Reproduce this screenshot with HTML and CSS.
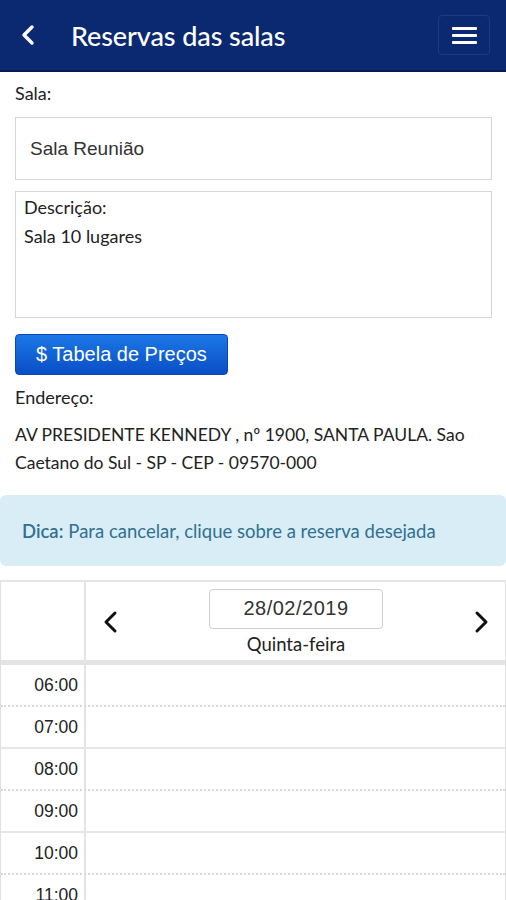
FILE: index.html
```html
<!DOCTYPE html>
<html lang="pt-BR">

<head>
	<meta charset="UTF-8">
	<meta name="viewport" content="width=device-width, initial-scale=1.0">
	<title>Reservas das salas</title>
	<link rel="stylesheet" href="styles.css">
</head>

<body>

	<header class="topbar">
		<a class="back" href="#">
			<svg width="16" height="22" viewBox="0 0 16 22"><path d="M12 3 L4 11 L12 19" fill="none" stroke="#fff" stroke-width="3.4" stroke-linecap="round" stroke-linejoin="round"/></svg>
		</a>
		<h1 class="title">Reservas das salas</h1>
		<button class="menu" type="button">
			<span></span><span></span><span></span>
		</button>
	</header>

	<main class="content">
		<div class="label">Sala:</div>
		<div class="field">Sala Reunião</div>

		<div class="descricao">
			<div>Descrição:</div>
			<div>Sala 10 lugares</div>
		</div>

		<button class="btn-precos" type="button">$ Tabela de Preços</button>

		<div class="label endereco-label">Endereço:</div>
		<p class="endereco">AV PRESIDENTE KENNEDY , nº 1900, SANTA PAULA. Sao Caetano do Sul - SP - CEP - 09570-000</p>
	</main>

	<div class="dica"><b>Dica:</b> Para cancelar, clique sobre a reserva desejada</div>

	<section class="agenda">
		<div class="agenda-head">
			<div class="hora-col"></div>
			<div class="dia-col">
				<svg class="nav" width="20" height="26" viewBox="0 0 20 26"><path d="M14 4 L5 13 L14 22" fill="none" stroke="#111" stroke-width="3" stroke-linecap="round" stroke-linejoin="round"/></svg>
				<div class="dia">
					<div class="data">28/02/2019</div>
					<div class="semana">Quinta-feira</div>
				</div>
				<svg class="nav" width="20" height="26" viewBox="0 0 20 26"><path d="M6 4 L15 13 L6 22" fill="none" stroke="#111" stroke-width="3" stroke-linecap="round" stroke-linejoin="round"/></svg>
			</div>
		</div>

		<div class="slot meia"><div class="hora">06:00</div><div class="livre"></div></div>
		<div class="slot"><div class="hora">07:00</div><div class="livre"></div></div>
		<div class="slot meia"><div class="hora">08:00</div><div class="livre"></div></div>
		<div class="slot"><div class="hora">09:00</div><div class="livre"></div></div>
		<div class="slot meia"><div class="hora">10:00</div><div class="livre"></div></div>
		<div class="slot"><div class="hora">11:00</div><div class="livre"></div></div>
	</section>

</body>

</html>
```

FILE: styles.css
```css
body {
	margin: 0;
	font-family: Lato, "Open Sans", sans-serif;
	color: #222;
	background: #fff;
}

.topbar {
	display: flex;
	align-items: center;
	height: 70px;
	background-color: #0b2970;
	border-bottom: 2px solid #071c52;
}

.back {
	display: flex;
	margin-left: 20px;
	width: 16px;
}

.title {
	margin: 0 0 0 35px;
	flex: 1;
	font-size: 27px;
	font-weight: 500;
	color: #fff;
	letter-spacing: -0.1px;
}

.menu {
	display: flex;
	flex-direction: column;
	justify-content: center;
	align-items: center;
	gap: 4px;
	width: 52px;
	height: 40px;
	margin-right: 16px;
	background: transparent;
	border: 1px solid #1d3a82;
	border-radius: 4px;
}

.menu span {
	display: block;
	width: 25px;
	height: 3px;
	background: #fff;
	border-radius: 1px;
}

.content {
	padding: 10px 14px 0 15px;
}

.label {
	font-size: 18px;
	line-height: 22px;
}

.field {
	margin-top: 13px;
	height: 61px;
	display: flex;
	align-items: center;
	padding-left: 14px;
	border: 1px solid #d6d6d6;
	font-family: "Liberation Sans", Arial, sans-serif;
	font-size: 19px;
	color: #333;
}

.descricao {
	margin-top: 11px;
	height: 116px;
	padding: 1px 8px 8px 8px;
	border: 1px solid #d6d6d6;
	font-size: 18px;
	line-height: 29px;
}

.btn-precos {
	margin-top: 16px;
	width: 213px;
	height: 41px;
	padding: 0 0 0 20px;
	text-align: left;
	background: linear-gradient(#1c78e6, #0a4ec6);
	color: #fff;
	border: 1px solid #0a48b8;
	border-radius: 4px;
	font-family: "Liberation Sans", Arial, sans-serif;
	font-size: 20px;
}

.endereco-label {
	margin-top: 11px;
}

.endereco {
	margin: 13px 0 0 0;
	font-size: 17.5px;
	line-height: 28px;
}

.dica {
	margin-top: 18px;
	height: 71px;
	display: flex;
	align-items: center;
	padding-left: 22px;
	background-color: #d9edf7;
	border-radius: 6px;
	color: #31708f;
	font-size: 18.5px;
}

.dica b {
	font-weight: 600;
	margin-right: 5px;
}

.agenda {
	margin-top: 14px;
	border-top: 2px solid #e6e6e6;
	border-left: 1px solid #e0e0e0;
	border-right: 1px solid #e0e0e0;
}

.agenda-head {
	display: flex;
	height: 78px;
	border-bottom: 5px solid #e4e4e4;
}

.hora-col {
	width: 83px;
	border-right: 2px solid #e4e4e4;
}

.dia-col {
	flex: 1;
	display: flex;
	align-items: center;
	justify-content: space-between;
	padding: 0 14px 0 15px;
}

.nav {
	margin-top: 2px;
}

.dia {
	display: flex;
	flex-direction: column;
	align-items: center;
	padding-top: 1px;
}

.data {
	width: 172px;
	height: 38px;
	display: flex;
	align-items: center;
	justify-content: center;
	border: 1px solid #cfcfcf;
	border-radius: 4px;
	font-family: "Liberation Sans", Arial, sans-serif;
	font-size: 20px;
	letter-spacing: 0.5px;
	color: #333;
}

.semana {
	margin-top: 4px;
	font-size: 18.5px;
	line-height: 22px;
}

.slot {
	display: flex;
	height: 40px;
	border-bottom: 2px solid #e6e6e6;
}

.slot.meia {
	border-bottom: 2px dotted #d8d8d8;
}

.hora {
	width: 77px;
	padding-right: 6px;
	display: flex;
	align-items: center;
	justify-content: flex-end;
	border-right: 2px solid #e4e4e4;
	font-family: "Liberation Sans", Arial, sans-serif;
	font-size: 17.5px;
	color: #222;
}

.livre {
	flex: 1;
}
```
